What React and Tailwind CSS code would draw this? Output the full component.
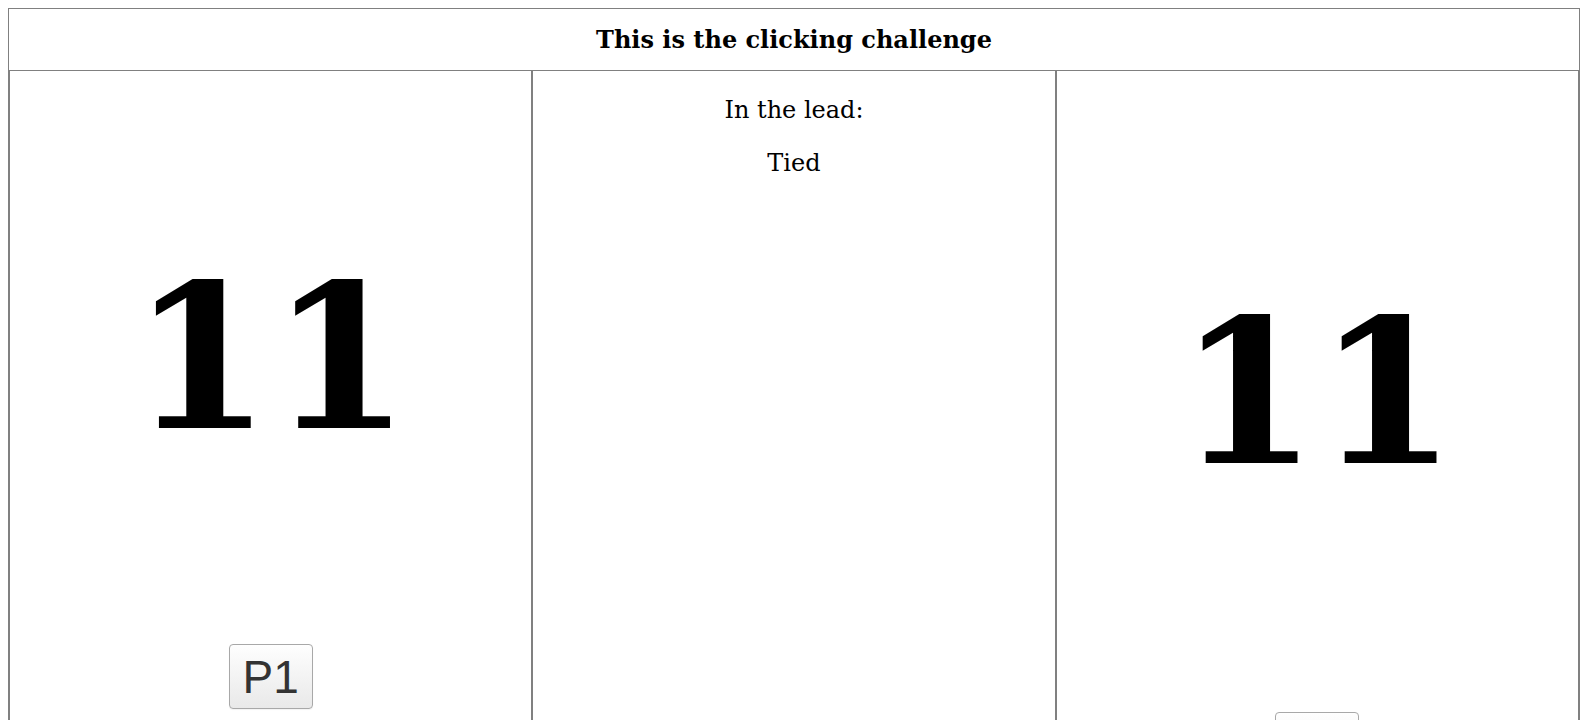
export default function App() {
  const btn =
    "w-[84px] h-[65px] rounded-[4px] border border-[#a8a8a8] bg-gradient-to-b from-[#fefefe] to-[#e9e9e9] text-[#333] text-[46px] leading-none flex items-center justify-center shadow-[0_1px_1px_rgba(0,0,0,0.05)]";
  return (
    <div className="p-2 bg-white">
      <div className="border border-[#808080] font-['DejaVu_Serif',serif] text-black">
        <div className="h-[62px] border-b border-[#808080] flex items-center justify-center">
          <span className="text-[24px] leading-[28px] font-bold">This is the clicking challenge</span>
        </div>
        <div className="grid grid-cols-3 h-[900px]">
          <div className="border-x border-[#808080] flex flex-col items-center">
            <div className="mt-[187px] text-[200px] leading-[200px] font-bold">11</div>
            <button className={"mt-[186px] font-['Liberation_Sans',sans-serif] " + btn}>P1</button>
          </div>
          <div className="border-x border-[#808080] flex flex-col items-center">
            <p className="mt-[25px] text-[24px] leading-[29px]">In the lead:</p>
            <p className="mt-6 text-[24px] leading-[29px]">Tied</p>
          </div>
          <div className="border-x border-[#808080] flex flex-col items-center">
            <div className="mt-[222px] text-[200px] leading-[200px] font-bold">11</div>
            <button className={"mt-[219px] font-['Liberation_Sans',sans-serif] " + btn}>P2</button>
          </div>
        </div>
      </div>
    </div>
  );
}
